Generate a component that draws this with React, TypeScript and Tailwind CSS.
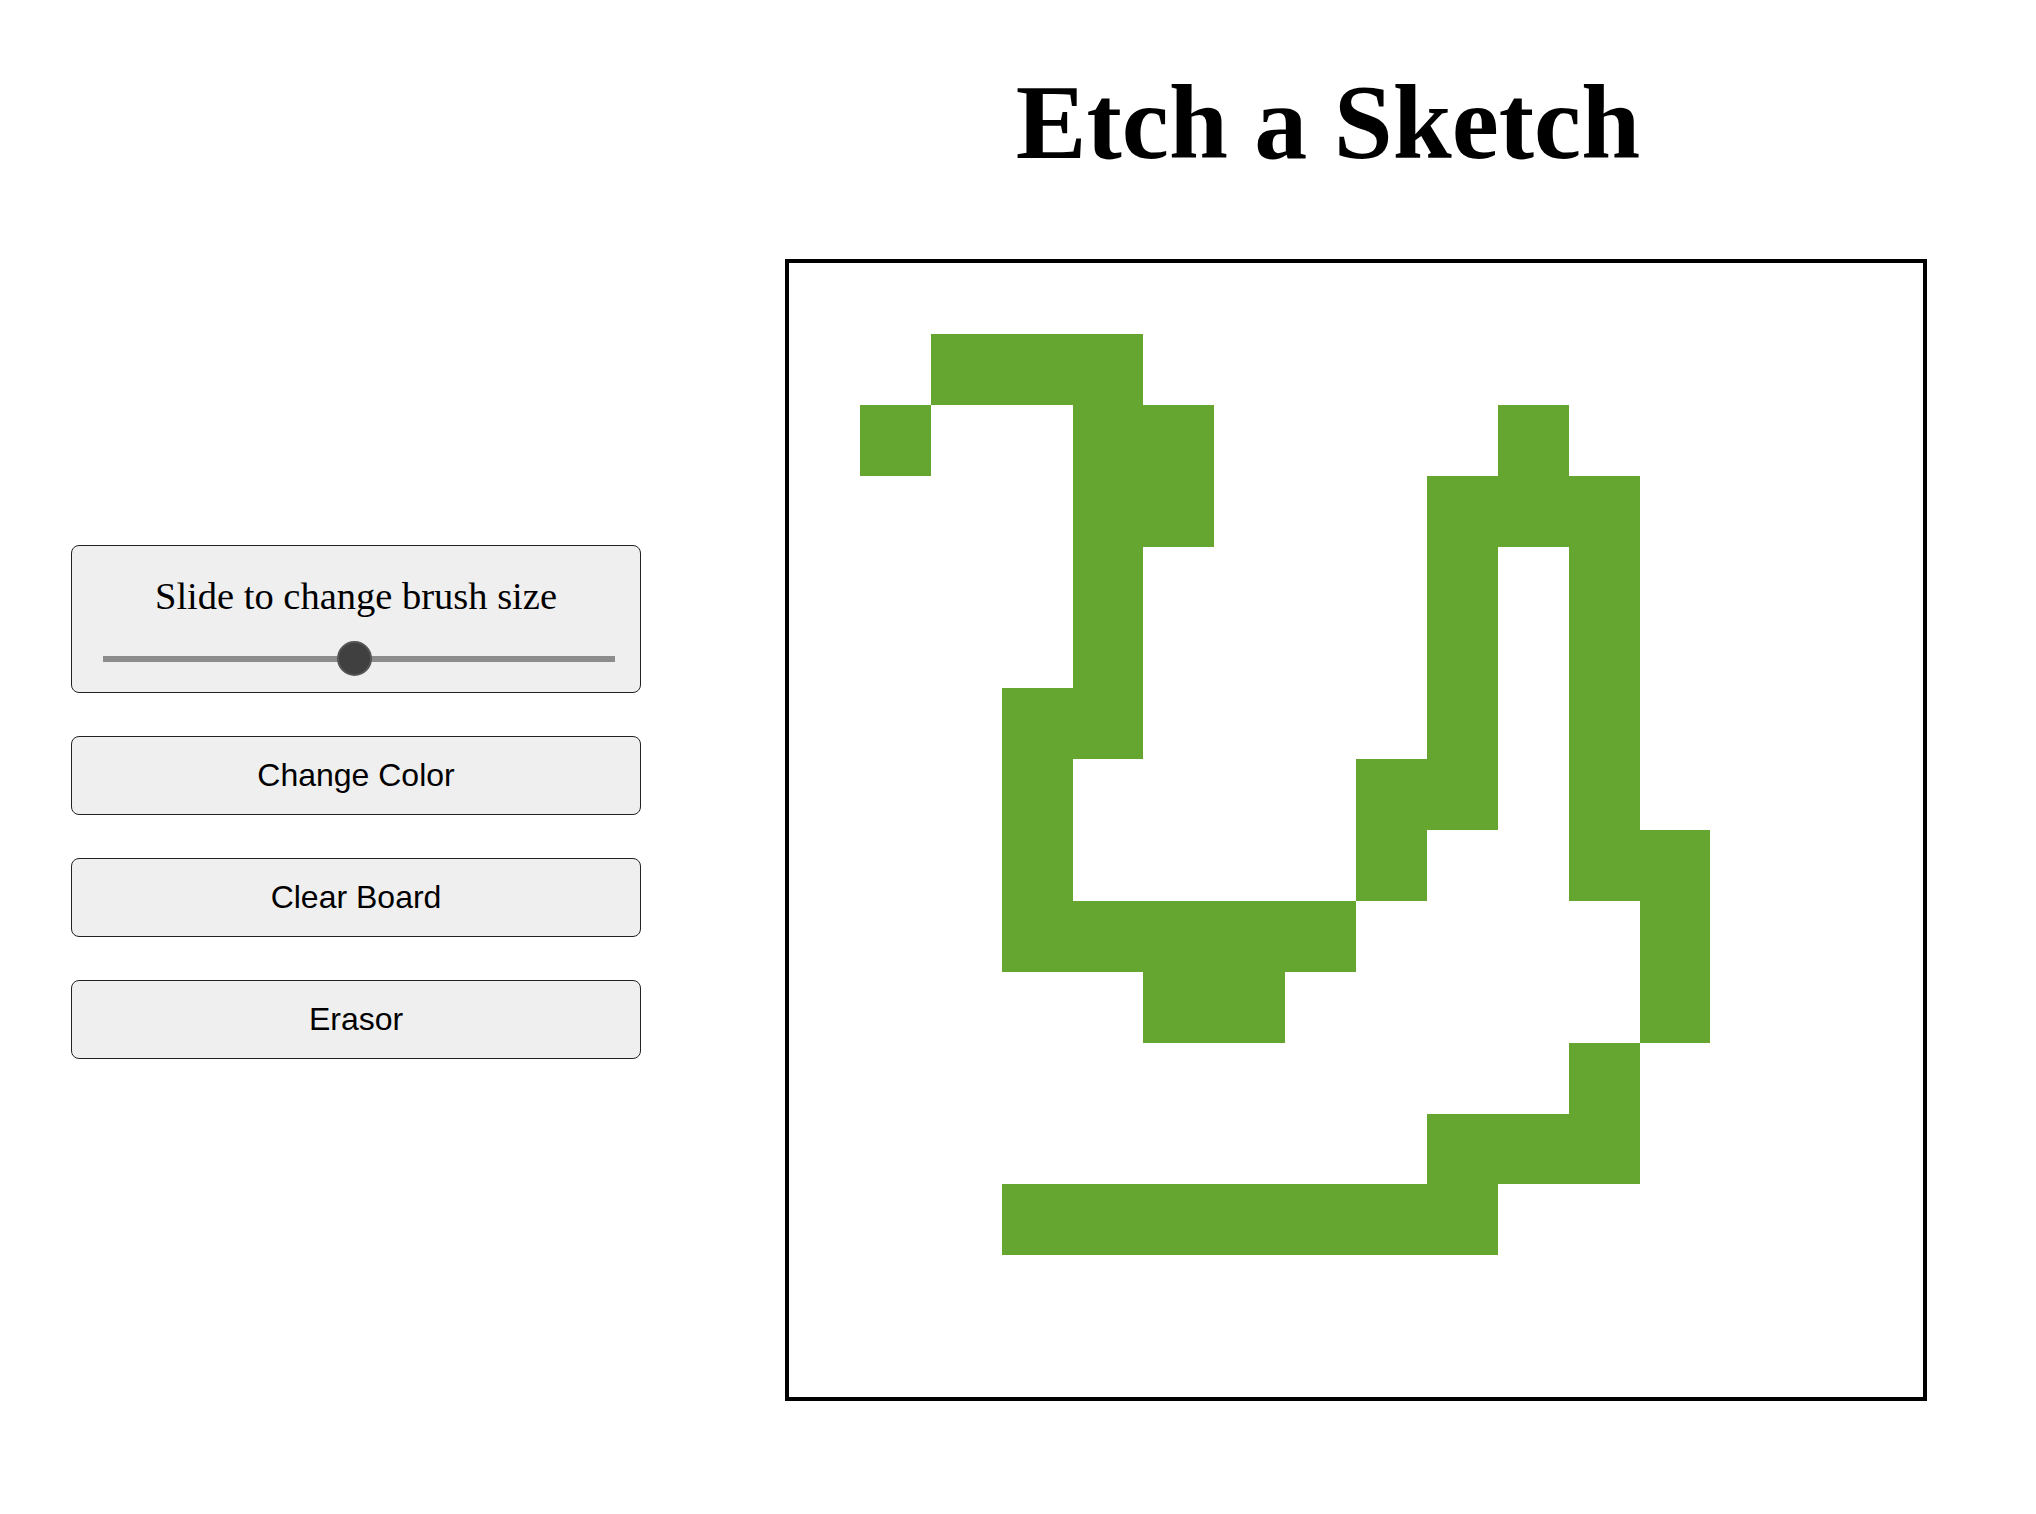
import { useState } from "react";

const GREEN = "#65a631";

// filled cells, row -> columns (16x16 board)
const DRAWING: Record<number, number[]> = {
  1: [2, 3, 4],
  2: [1, 4, 5, 10],
  3: [4, 5, 9, 10, 11],
  4: [4, 9, 11],
  5: [4, 9, 11],
  6: [3, 4, 9, 11],
  7: [3, 8, 9, 11],
  8: [3, 8, 11, 12],
  9: [3, 4, 5, 6, 7, 12],
  10: [5, 6, 12],
  11: [11],
  12: [9, 10, 11],
  13: [3, 4, 5, 6, 7, 8, 9],
};

const SIZE = 16;

const ControlButton = ({ label }: { label: string }) => (
  <button
    type="button"
    className="flex h-[79px] w-full items-center justify-center rounded-[8px] border border-[#222] bg-[#efefef] font-['Liberation_Sans',Arial,sans-serif] text-[32px] leading-none text-black"
  >
    {label}
  </button>
);

export default function App() {
  const [brush, setBrush] = useState(49);

  const cells = [];
  for (let r = 0; r < SIZE; r++) {
    for (let c = 0; c < SIZE; c++) {
      const filled = DRAWING[r]?.includes(c);
      cells.push(
        <div
          key={`${r}-${c}`}
          style={{ backgroundColor: filled ? GREEN : "#ffffff" }}
        />
      );
    }
  }

  return (
    <div className="flex min-h-[1514px] w-full bg-white pl-[71px]">
      <div className="mt-[545px] flex w-[570px] flex-col gap-[43px]">
        <div className="rounded-[8px] border border-[#222] bg-[#efefef] pb-[30px] pt-[31px]">
          <p className="text-center font-['Liberation_Serif','Times_New_Roman',serif] text-[38.5px] leading-none text-black">
            Slide to change brush size
          </p>
          <input
            type="range"
            min={0}
            max={100}
            value={brush}
            onChange={(e) => setBrush(Number(e.target.value))}
            className="mb-0 ml-[31px] mr-0 mt-[40px] block h-[6px] w-[512px] cursor-pointer appearance-none bg-[#8c8c8c] outline-none [&::-webkit-slider-thumb]:h-[35px] [&::-webkit-slider-thumb]:w-[35px] [&::-webkit-slider-thumb]:appearance-none [&::-webkit-slider-thumb]:rounded-full [&::-webkit-slider-thumb]:border-2 [&::-webkit-slider-thumb]:border-[#555] [&::-webkit-slider-thumb]:bg-[#404040]"
          />
        </div>
        <ControlButton label="Change Color" />
        <ControlButton label="Clear Board" />
        <ControlButton label="Erasor" />
      </div>

      <div className="ml-[144px] flex flex-col">
        <h1 className="mt-[70px] pr-[56px] text-center font-['Liberation_Serif','Times_New_Roman',serif] text-[106px] font-bold leading-none text-black">
          Etch a Sketch
        </h1>
        <div className="mt-[83px] grid h-[1142px] w-[1142px] grid-cols-16 grid-rows-16 border-4 border-black">
          {cells}
        </div>
      </div>
    </div>
  );
}
